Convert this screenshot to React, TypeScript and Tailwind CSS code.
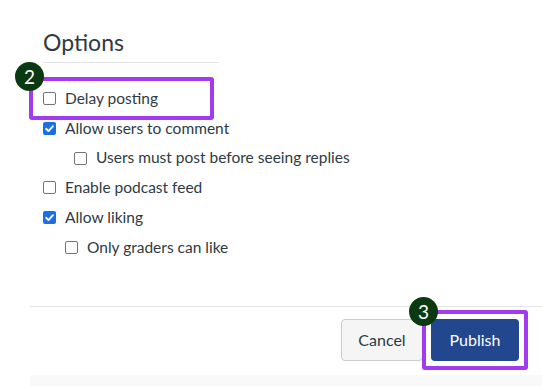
import type { ReactNode } from 'react'

interface OptionRow {
  label: string
  checked: boolean
  indent: number
}

const options: OptionRow[] = [
  { label: 'Delay posting', checked: false, indent: 0 },
  { label: 'Allow users to comment', checked: true, indent: 0 },
  { label: 'Users must post before seeing replies', checked: false, indent: 31 },
  { label: 'Enable podcast feed', checked: false, indent: 0 },
  { label: 'Allow liking', checked: true, indent: 0 },
  { label: 'Only graders can like', checked: false, indent: 22 },
]

function Box({ checked }: { checked: boolean }) {
  if (checked) {
    return (
      <span className="w-[13px] h-[13px] rounded-[2px] bg-[#1a6fe6] flex items-center justify-center shrink-0">
        <svg width="11" height="11" viewBox="0 0 12 12" fill="none">
          <path d="M2.3 6.3 L4.9 8.8 L9.8 3.4" stroke="white" strokeWidth="2" strokeLinecap="round" strokeLinejoin="round" />
        </svg>
      </span>
    )
  }
  return <span className="w-[13px] h-[13px] rounded-[2px] border border-[#6e757c] bg-white shrink-0" />
}

function Badge({ children, className }: { children: ReactNode; className: string }) {
  return (
    <span
      className={`absolute w-[29px] h-[29px] rounded-full bg-[#0b3a12] text-white text-[19px] leading-none flex items-center justify-center ${className}`}
    >
      {children}
    </span>
  )
}

export default function App() {
  return (
    <div className="w-[542px] h-[386px] bg-white overflow-hidden flex flex-col text-[#2d3b45] font-['Lato','Open_Sans',sans-serif]">
      {/* Options section */}
      <section className="pt-[26px] pl-[43px]">
        <h2 className="text-[23px] leading-[32px] font-normal">Options</h2>
        <div className="w-[176px] mt-[4px] border-b border-[#e3e6e8]" />

        <div className="relative mt-[21px] flex flex-col">
          {options.map((o) => (
            <label
              key={o.label}
              className="h-[29.7px] flex items-center gap-[9px] text-[15.5px]"
              style={{ paddingLeft: o.indent }}
            >
              <Box checked={o.checked} />
              <span className="leading-none">{o.label}</span>
            </label>
          ))}

          {/* highlight around first option */}
          <div className="absolute left-[-14px] top-[-7px] w-[185px] h-[43px] border-[4px] border-[#a23bf0] rounded-[3px]" />
          <Badge className="left-[-28px] top-[-22px]">2</Badge>
        </div>
      </section>

      {/* Footer */}
      <footer className="ml-[30px] mt-[44px] flex flex-col">
        <div className="border-t border-[#e3e6e8]" />
        <div className="flex justify-end gap-[8px] pr-[23px] pt-[12px]">
          <button className="h-[42px] px-[14px] w-[82px] bg-[#f5f5f5] border border-[#c7cdd1] rounded-[4px] text-[16px] text-[#2d3b45]">
            Cancel
          </button>
          <div className="relative">
            <button className="h-[42px] w-[88px] bg-[#23478e] rounded-[4px] text-[16px] text-white">
              Publish
            </button>
            <div className="absolute left-[-9px] top-[-9px] w-[106px] h-[60px] border-[4px] border-[#a23bf0] rounded-[3px]" />
            <Badge className="left-[-22px] top-[-22px]">3</Badge>
          </div>
        </div>
        <div className="mt-[14px] h-[12px] bg-[#f9f9f9]" />
      </footer>
    </div>
  )
}
